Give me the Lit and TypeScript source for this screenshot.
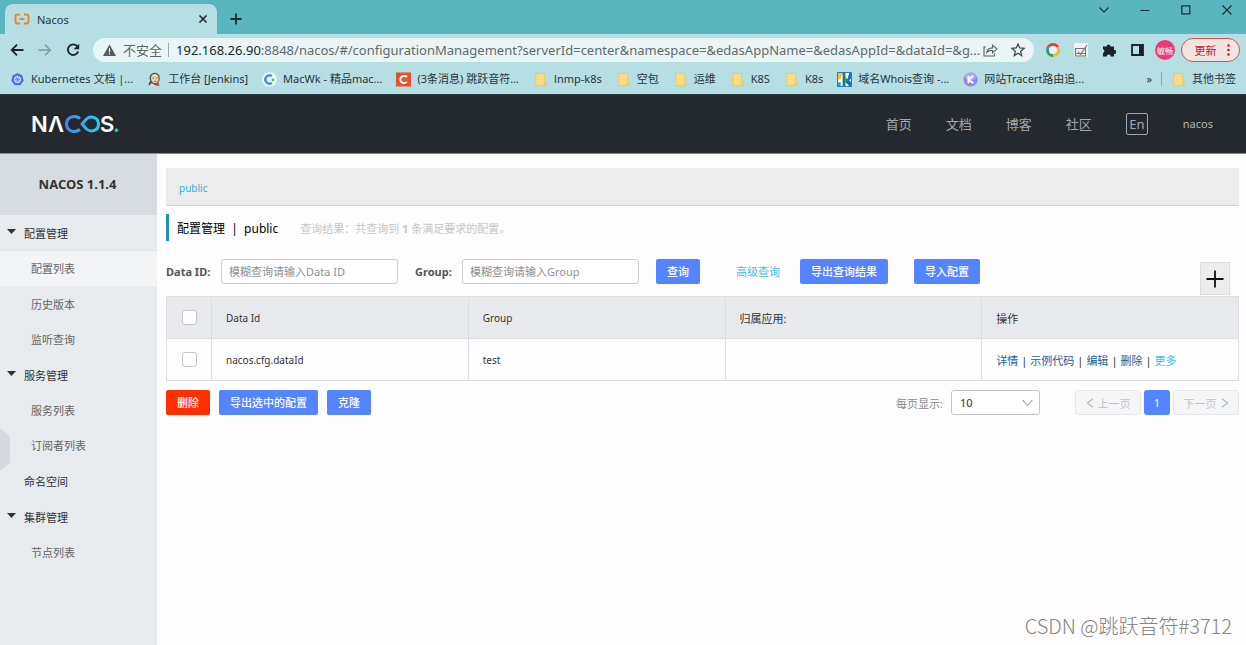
import { LitElement, html, css, svg, nothing } from "lit";
import { customElement, state } from "lit/decorators.js";
import { classMap } from "lit/directives/class-map.js";

const cjk = css`"Noto Sans", "Noto Sans CJK SC", sans-serif`;

const folder = svg`<svg class="ico" viewBox="0 0 16 16"><path d="M3 1.5h9.5v9l1.500.500v3.500H3z" fill="#f9dc84" stroke="#e8c45c" stroke-width=".8"/><path d="M11.500 11.500h2.500v3h-2.500z" fill="#f3ca5c"/></svg>`;

const icons: Record<string, unknown> = {
  folder,
  k8s: svg`<svg class="ico" viewBox="0 0 16 16"><path d="M8 .8l5.500 2.600 1.400 5.900-3.700 5H4.800l-3.700-5 1.400-5.900z" fill="#3b6fe0" stroke="#dfeaff" stroke-width=".6"/><circle cx="8" cy="8" r="3.200" fill="none" stroke="#fff" stroke-width=".9"/><path d="M8 3.500v9M3.800 6.700l8.400 2.600M4 9.800l8-3.600M5.400 11.600l5.200-7.200M5.400 4.400l5.200 7.200" stroke="#fff" stroke-width=".5"/><circle cx="8" cy="8" r="1" fill="#3b6fe0"/></svg>`,
  jenkins: svg`<svg class="ico" viewBox="0 0 16 16"><path d="M2 15c-.5-4 1-5 1.500-6C1.500 5 4 1 8 .8c4 0 6.300 3 5.500 7-.300 2-1.500 3.500-1.500 4l2 3.200z" fill="#5d5650"/><path d="M4.200 6C4.500 3.500 6 2 8.300 2c2.700 0 4.200 2 4 5-.200 3-1.300 5-3.600 5S4.500 9.500 4.200 6z" fill="#efd0b3"/><path d="M6 6.500h1.500M9.700 6.500h1.500M7.500 10h2.500" stroke="#5d4436" stroke-width=".8"/><path d="M2 15l3-3 3 1.500 3-1.500 3 3z" fill="#ddd"/><path d="M7 12.700l5-.7.500 2.800L9 14z" fill="#c33228"/></svg>`,
  macwk: svg`<svg class="ico" viewBox="0 0 16 16"><circle cx="8" cy="8" r="7.800" fill="#f3f9ff"/><path d="M10.500 4.400a4.400 4.400 0 1 0 0 7.200" fill="none" stroke="#3f8cf5" stroke-width="2.600"/><circle cx="11.700" cy="8.300" r="1.600" fill="#3ec95a"/></svg>`,
  csdn: svg`<svg class="ico" viewBox="0 0 16 16"><path d="M0 .5h16v15H0z" fill="#e8502f"/><path d="M11.800 5.200C9 3.200 4.600 4.400 4.600 8s4.400 4.800 7 2.800" fill="none" stroke="#fff" stroke-width="2"/></svg>`,
  whois: svg`<svg class="ico" viewBox="0 0 16 16"><path d="M.5.5h15v15H.500z" fill="#fff" stroke="#1d6fae"/><path d="M1 1h5L3.500 8H1z" fill="#f4c529"/><path d="M6 1h3v14H6z" fill="#227b5b"/><path d="M9 8V5l2 3 2-7h2v6l-2 2 2 2v4h-2L9 11z" fill="#1871b8"/><path d="M1 11h3v4H1z" fill="#27a0cf"/></svg>`,
  tracert: svg`<svg class="ico" viewBox="0 0 16 16"><circle cx="8" cy="8" r="7.500" fill="#8c88ee"/><ellipse cx="8" cy="5" rx="6" ry="4" fill="#aaa8f7"/><path d="M5.800 4v8M10.800 4L6 8.300l5 3.700" fill="none" stroke="#fff" stroke-width="1.900"/></svg>`,
};

const bookmarks: [string, string][] = [
  ["k8s", "Kubernetes 文档 |..."],
  ["jenkins", "工作台 [Jenkins]"],
  ["macwk", "MacWk - 精品mac..."],
  ["csdn", "(3条消息) 跳跃音符..."],
  ["folder", "lnmp-k8s"],
  ["folder", "空包"],
  ["folder", "运维"],
  ["folder", "K8S"],
  ["folder", "K8s"],
  ["whois", "域名Whois查询 -..."],
  ["tracert", "网站Tracert路由追..."],
];

@customElement("browser-chrome")
export class BrowserChrome extends LitElement {
  static styles = css`
    :host { display: block; font-family: ${cjk}; color: #26363a; background: #b5dfe2; border-bottom: 1px solid #2b3a40; }
    * { box-sizing: border-box; }
    button { font: inherit; color: inherit; border: 0; background: none; padding: 0; display: flex; align-items: center; justify-content: center; flex: none; }
    svg { display: block; flex: none; }
    .tabs { display: flex; height: 34px; background: #5ab5be; padding-left: 5px; }
    .tab { display: flex; align-items: center; width: 212px; height: 30px; margin-top: 4px; padding: 0 8px 0 9px; background: #b5dfe2; border-radius: 8px 8px 0 0; font-size: 11px; gap: 7px; }
    .tab-name { flex: 1; }
    .plus { width: 38px; height: 30px; margin-top: 4px; }
    .window { margin-left: auto; display: flex; height: 20px; gap: 3px; }
    .window button { width: 38px; }
    .toolbar { display: flex; align-items: center; height: 32px; padding: 0 6px 0 3px; }
    .nav { width: 28px; height: 24px; }
    .address { flex: 1; min-width: 0; height: 24px; margin: 0 5px 0 6px; border-radius: 12px; background: #eaf6f6; display: flex; align-items: center; padding: 0 2px 0 10px; }
    .unsafe { font-size: 13px; line-height: 20px; color: #5f6668; margin: 0 6px 0 7px; white-space: nowrap; }
    .rule { width: 1px; height: 14px; background: #9aa8aa; flex: none; }
    .host { font-size: 13px; color: #20282a; margin-left: 7px; }
    .url { flex: 1; min-width: 0; border: 0; padding: 0; background: none; outline: 0; color: #62696b; font: 13px ${cjk}; text-overflow: ellipsis; }
    .tool { width: 28px; height: 24px; }
    .share { width: 15px; margin-right: 6px; }
    .avatar { width: 20px; height: 20px; border-radius: 50%; background: #ec3a78; color: #fff; font-size: 8px; margin: 0 6px 0 4px; }
    .update { width: 59px; height: 24px; border: 1px solid #d4574f; border-radius: 12px; background: #f2e4e3; color: #c5221f; font-size: 11px; gap: 10px; padding-left: 3px; }
    .marks { display: flex; align-items: center; height: 28px; padding: 0 10px 2px 10px; gap: 14px; font-size: 11px; line-height: 16px; white-space: nowrap; overflow: hidden; }
    .mark { display: flex; align-items: center; gap: 6px; color: inherit; text-decoration: none; }
    .ico { width: 15px; height: 15px; }
    .more { margin-left: auto; display: flex; align-items: center; gap: 9px; }
  `;

  render() {
    return html`
      <div class="tabs">
        <div class="tab">
          <svg width="16" height="12" viewBox="0 0 16 12"><path d="M6 1.500H3.500Q1.500 1.500 1.500 3.500v5q0 2 2 2H6M10 1.500h2.500q2 0 2 2v5q0 2-2 2H10M5.500 6h5" fill="none" stroke="#e8803a" stroke-width="1.900"/></svg>
          <span class="tab-name">Nacos</span>
          <button aria-label="关闭标签页"><svg width="12" height="12" viewBox="0 0 12 12"><path d="M2.500 2.500l7 7M9.500 2.500l-7 7" stroke="#20282a" stroke-width="1.600"/></svg></button>
        </div>
        <button class="plus" aria-label="新标签页"><svg width="12" height="12" viewBox="0 0 12 12"><path d="M6 .5v11M.5 6h11" stroke="#1c2c30" stroke-width="1.800"/></svg></button>
        <div class="window">
          <button aria-label="搜索标签页"><svg width="12" height="10" viewBox="0 0 12 10"><path d="M1.500 2.500L6 7l4.500-4.500" fill="none" stroke="#1c2c30" stroke-width="1.100"/></svg></button>
          <button aria-label="最小化"><svg width="10" height="10" viewBox="0 0 10 10"><path d="M.5 5.500h9" stroke="#1c2c30"/></svg></button>
          <button aria-label="最大化"><svg width="10" height="10" viewBox="0 0 10 10"><path d="M.8.8h8v8h-8z" fill="none" stroke="#1c2c30" stroke-width="1.200"/></svg></button>
          <button aria-label="关闭"><svg width="10" height="10" viewBox="0 0 10 10"><path d="M.5.500l9 9M9.500.500l-9 9" stroke="#1c2c30" stroke-width="1.100"/></svg></button>
        </div>
      </div>
      <div class="toolbar">
        <button class="nav" aria-label="后退"><svg width="14" height="14" viewBox="0 0 14 14"><path d="M13.500 7H2M7 1.700L1.700 7 7 12.300" fill="none" stroke="#1d2629" stroke-width="1.800"/></svg></button>
        <button class="nav" aria-label="前进"><svg width="14" height="14" viewBox="0 0 14 14"><path d="M.5 7H12M7 1.700L12.300 7 7 12.300" fill="none" stroke="#7b999d" stroke-width="1.500"/></svg></button>
        <button class="nav" aria-label="重新加载"><svg width="14" height="14" viewBox="0 0 14 14"><path d="M11.300 3.300A5.300 5.300 0 1 0 12.200 8.500" fill="none" stroke="#1d2629" stroke-width="1.900"/><path d="M13.200.700v5.500H7.700z" fill="#1d2629"/></svg></button>
        <div class="address">
          <svg width="13" height="12" viewBox="0 0 13 12"><path d="M6.500.500L13 12H0z" fill="#54595b"/><path d="M6.500 4.200v4M6.500 9.200v1.300" stroke="#fff" stroke-width="1.300"/></svg>
          <span class="unsafe">不安全</span><span class="rule"></span><span class="host">192.168.26.90</span>
          <input class="url" aria-label="地址" .value=${":8848/nacos/#/configurationManagement?serverId=center&namespace=&edasAppName=&edasAppId=&dataId=&g..."} />
          <button class="tool share" aria-label="分享"><svg width="15" height="14" viewBox="0 0 15 14"><path d="M2.700 4H1v9h10.500V10.500M3.700 9.500c.5-3 2.500-4.500 5.800-4.600V2.200L14 6 9.500 9.800V7.200c-2.500 0-4.300.6-5.800 2.300z" fill="none" stroke="#555e60" stroke-width="1.100"/></svg></button>
          <button class="tool" aria-label="收藏"><svg width="14" height="14" viewBox="0 0 14 14"><path d="M7 1l1.700 4 4.300.4-3.300 2.900 1 4.200L7 10.200l-3.700 2.300 1-4.200L1 5.400 5.300 5z" fill="none" stroke="#444c4e" stroke-width="1.300"/></svg></button>
        </div>
        <button class="tool" aria-label="扩展一"><svg width="16" height="16" viewBox="0 0 16 16"><g fill="none" stroke-width="3"><path d="M3.200 5.200A5.500 5.500 0 0 1 12.800 5.200" stroke="#dc4437"/><path d="M12.800 5.200A5.500 5.500 0 0 1 8 13.500" stroke="#f4bc2a"/><path d="M8 13.500A5.500 5.500 0 0 1 2.500 8" stroke="#35a257"/><path d="M2.500 8a5.500 5.500 0 0 1 .7-2.800" stroke="#4a8bf0"/></g><circle cx="8" cy="8" r="4" fill="#e9f3fb"/></svg></button>
        <button class="tool" aria-label="扩展二"><svg width="14" height="14" viewBox="0 0 14 14"><path d="M0 0h14v14H0z" fill="#f3f3f3"/><path d="M1 5.500h11M1.500 5.500v7.500h10V5.500M4 8.500l2.500 3L13 2M1.500 10.500h10" fill="none" stroke="#777" stroke-width="1.100"/></svg></button>
        <button class="tool" aria-label="扩展程序"><svg width="14" height="14" viewBox="0 0 14 14"><path d="M1 3.500h3.500a2 2 0 1 1 4 0H12V7a2 2 0 1 1 0 3.800V13.500H8.700a2 2 0 0 0-4 0H1V10a2 2 0 0 0 0-3.800z" fill="#1b2326"/></svg></button>
        <button class="tool" aria-label="侧边栏"><svg width="13" height="12" viewBox="0 0 13 12"><path d="M1 1h11v10H1z" fill="none" stroke="#1b2326" stroke-width="1.800"/><path d="M8 1h4v10H8z" fill="#1b2326"/></svg></button>
        <button class="avatar" aria-label="用户">敏畅</button>
        <button class="update">更新<svg width="3" height="12" viewBox="0 0 3 12"><g fill="#c5221f"><circle cx="1.500" cy="1.500" r="1.300"/><circle cx="1.500" cy="6" r="1.300"/><circle cx="1.500" cy="10.500" r="1.300"/></g></svg></button>
      </div>
      <nav class="marks">
        ${bookmarks.map(([icon, name]) => html`<a class="mark" href="#">${icons[icon]}<span>${name}</span></a>`)}
        <div class="more"><span>»</span><span class="rule"></span><a class="mark" href="#">${folder}<span>其他书签</span></a></div>
      </nav>`;
  }
}

@customElement("nacos-header")
export class NacosHeader extends LitElement {
  static styles = css`
    :host { display: flex; align-items: center; height: 59px; box-sizing: border-box; padding: 0 33px 0 30px; background: #24292f; border-bottom: 1px solid #85888c; font-family: ${cjk}; }
    .logo { display: block; width: 96px; height: 40px; }
    .menu { margin-left: auto; display: flex; align-items: center; gap: 34px; }
    .link { color: #a3a7ab; font-size: 13px; line-height: 20px; text-decoration: none; }
    .lang { box-sizing: border-box; width: 22px; height: 22px; padding: 0; border: 1px solid #a3a7ab; border-radius: 2px; background: none; color: #a3a7ab; font: 13px/18px ${cjk}; margin-right: 1px; }
    .user { font-size: 11px; color: #b0b3b6; }
  `;

  render() {
    return html`
      <svg class="logo" viewBox="0 0 96 40" role="img" aria-label="NACOS.">
        <defs><linearGradient id="g" gradientUnits="userSpaceOnUse" x1="35" y1="0" x2="70" y2="0"><stop offset="0" stop-color="#4a7ff2"/><stop offset="1" stop-color="#22d5e6"/></linearGradient></defs>
        <g font-family="Inter, sans-serif" font-weight="600" font-size="22" fill="#fff"><text x="1" y="28">N</text><text x="18" y="28">Λ</text><text x="70" y="28">S</text><text x="83" y="28" fill="#22c8dc">.</text></g>
        <path d="M50 14.500C44 10 36.500 13.500 36.500 20s7.500 10 13.500 5.500M52 20l4.500-5C61 11 68.500 13.500 68.500 20s-7.500 9-12 5z" fill="none" stroke="url(#g)" stroke-width="3" stroke-linejoin="round"/>
      </svg>
      <nav class="menu">
        ${["首页", "文档", "博客", "社区"].map((t) => html`<a class="link" href="#">${t}</a>`)}
        <button class="lang">En</button>
        <a class="link user" href="#">nacos</a>
      </nav>`;
  }
}

const menu: { name: string; items: string[] }[] = [
  { name: "配置管理", items: ["配置列表", "历史版本", "监听查询"] },
  { name: "服务管理", items: ["服务列表", "订阅者列表"] },
  { name: "命名空间", items: [] },
  { name: "集群管理", items: ["节点列表"] },
];

@customElement("nacos-sidebar")
export class NacosSidebar extends LitElement {
  @state() active = "配置列表";

  static styles = css`
    :host { display: block; position: relative; width: 157px; flex: none; background: #e7ebee; font-family: ${cjk}; font-size: 11px; color: #333; }
    .title { height: 61px; line-height: 61px; margin: 0; background: #d7dce3; text-align: center; font-size: 13px; font-weight: 700; padding-right: 2px; }
    .list { list-style: none; margin: 0; padding: 0; }
    .group { margin-bottom: 1px; }
    .head { display: flex; align-items: center; height: 35px; padding-left: 7px; gap: 8px; }
    .arrow { width: 9px; height: 5px; margin-bottom: 3px; }
    .item { display: block; height: 35px; line-height: 37px; padding-left: 31px; color: #666; text-decoration: none; }
    .active { background: #f2f4f6; border-top: 1px solid #e2e4e9; line-height: 35px; }
    .handle { position: absolute; left: 0; top: 274px; width: 10px; height: 43px; padding: 0; border: 0; background: #d5dae1; clip-path: polygon(0 0, 100% 20%, 100% 80%, 0 100%); }
  `;

  render() {
    return html`
      <h2 class="title">NACOS 1.1.4</h2>
      <ul class="list">
        ${menu.map((g) => html`<li class="group">
          <div class="head"><svg class="arrow" viewBox="0 0 9 5">${g.items.length ? svg`<path d="M0 0h9L4.500 5z" fill="#333"/>` : nothing}</svg>${g.name}</div>
          ${g.items.map((t) => html`<a href="#" class=${classMap({ item: true, active: t === this.active })}>${t}</a>`)}
        </li>`)}
      </ul>
      <button class="handle" aria-label="收起菜单"></button>`;
  }
}

@customElement("config-page")
export class ConfigPage extends LitElement {
  static styles = css`
    :host { display: block; flex: 1; min-width: 0; padding: 14px 7px 0 9px; background: #fdfdfd; font-family: ${cjk}; font-size: 11px; color: #333; }
    * { box-sizing: border-box; }
    .namespace { height: 38px; display: flex; align-items: center; padding: 2px 13px 0; background: #ececec; border-bottom: 1px solid #d3d3d3; }
    .namespace a { color: #35b4d2; font-size: 10px; text-decoration: none; }
    .heading { display: flex; align-items: center; height: 27px; margin: 8px 0 18px; border-left: 3px solid #1f8fb3; padding-left: 8px; }
    .heading h1 { margin: 0 22px 0 0; font-size: 12px; font-weight: 400; color: #000; white-space: pre; }
    .result { color: #c6c6c6; }
    .search { display: flex; height: 37px; }
    .field { display: flex; align-items: center; height: 25px; }
    .field label { font-weight: 700; color: #555; font-size: 11px; }
    .id-label { width: 55px; }
    .group-label { width: 47px; }
    .text { width: 177px; height: 25px; border: 1px solid #ccc; border-radius: 3px; padding: 0 7px; font: 11px ${cjk}; color: #333; background: #fff; }
    .field { margin-right: 17px; }
    .text::placeholder { color: #909090; opacity: 1; }
    .btn { height: 25px; padding: 0 11px; border: 0; border-radius: 2px; background: #5584ff; color: #fff; font: 500 11px/22px ${cjk}; white-space: nowrap; }
    .danger { background: #ff3000; }
    .advanced { line-height: 25px; margin: 0 20px 0 36px; color: #4cc0d2; text-decoration: none; }
    .import { margin-left: 26px; }
    .add { align-self: flex-end; width: 30px; height: 33px; margin: 0 9px 1px auto; padding: 0; border: 1px solid #ddd; background: #ececec; display: grid; place-items: center; }
    .table { width: 100%; border-collapse: collapse; table-layout: fixed; border: 1px solid #dcdee3; }
    .table th, .table td { height: 42px; padding: 0 14px; text-align: left; font-weight: 400; border: 1px solid #dcdee3; }
    .table th { background: #e8e9ed; }
    .table .check { width: 45px; padding: 0 0 2px; text-align: center; }
    .table .latin { font-size: 10px; }
    .box { appearance: none; width: 15px; height: 15px; margin: 0; border: 1px solid #c4c6cf; border-radius: 3px; background: #fff; vertical-align: middle; }
    .ops { white-space: nowrap; }
    .ops a { color: #1a5fa0; text-decoration: none; }
    .ops .open { color: #4cc0d2; }
    .sep { margin: 0 3px; }
    .foot { display: flex; align-items: center; margin-top: 9px; gap: 9px; }
    .size { margin-left: auto; display: flex; align-items: center; gap: 8px; color: #888; }
    .select { display: grid; align-items: center; width: 89px; }
    .select select { grid-area: 1 / 1; appearance: none; width: 100%; height: 25px; border: 1px solid #c4c6cf; border-radius: 3px; background: #fff; padding: 0 8px; font: 11px ${cjk}; color: #333; }
    .select svg { grid-area: 1 / 1; justify-self: end; margin-right: 7px; pointer-events: none; }
    .pages { display: flex; gap: 3px; margin-left: 26px; }
    .page { display: flex; align-items: center; justify-content: center; gap: 4px; width: 66px; height: 25px; border: 1px solid #e6e7eb; border-radius: 3px; background: #f5f6f8; color: #c4c4c4; font: 11px ${cjk}; padding: 0; }
    .current { width: 26px; border: 0; background: #5584ff; color: #fff; }
  `;

  render() {
    return html`
      <div class="namespace"><a href="#">public</a></div>
      <div class="heading"><h1>配置管理  |  public</h1><span class="result">查询结果：共查询到 <b>1</b> 条满足要求的配置。</span></div>
      <div class="search">
        <div class="field"><label class="id-label" for="did">Data ID:</label><input class="text" id="did" placeholder="模糊查询请输入Data ID" /></div>
        <div class="field"><label class="group-label" for="grp">Group:</label><input class="text" id="grp" placeholder="模糊查询请输入Group" /></div>
        <button class="btn">查询</button>
        <a class="advanced" href="#">高级查询</a>
        <button class="btn">导出查询结果</button>
        <button class="btn import">导入配置</button>
        <button class="add" aria-label="新建配置"><svg width="18" height="18" viewBox="0 0 18 18"><path d="M9 .5v17M.5 9h17" stroke="#111" stroke-width="1.800"/></svg></button>
      </div>
      <table class="table">
        <thead><tr><th class="check"><input class="box" type="checkbox" aria-label="全选" /></th><th class="latin">Data Id</th><th class="latin">Group</th><th>归属应用:</th><th>操作</th></tr></thead>
        <tbody><tr>
          <td class="check"><input class="box" type="checkbox" aria-label="选择 nacos.cfg.dataId" /></td><td class="latin">nacos.cfg.dataId</td><td class="latin">test</td><td></td>
          <td class="ops">${["详情", "示例代码", "编辑", "删除"].map((t) => html`<a href="#">${t}</a><span class="sep">|</span>`)}<a class="open" href="#">更多</a></td>
        </tr></tbody>
      </table>
      <div class="foot">
        <button class="btn danger">删除</button><button class="btn">导出选中的配置</button><button class="btn">克隆</button>
        <div class="size"><label for="size">每页显示:</label>
          <div class="select"><select id="size"><option>10</option><option>20</option><option>30</option></select>
          <svg width="11" height="8" viewBox="0 0 11 8"><path d="M.7 1l4.800 5.500L10.300 1" fill="none" stroke="#999" stroke-width="1.100"/></svg></div>
        </div>
        <div class="pages">
          <button class="page" disabled><svg width="8" height="10" viewBox="0 0 8 10"><path d="M7 .7L1.500 5 7 9.300" fill="none" stroke="#bbb" stroke-width="1.300"/></svg>上一页</button>
          <button class="page current">1</button>
          <button class="page" disabled>下一页<svg width="8" height="10" viewBox="0 0 8 10"><path d="M1 .7L6.500 5 1 9.300" fill="none" stroke="#bbb" stroke-width="1.300"/></svg></button>
        </div>
      </div>`;
  }
}

@customElement("app-root")
export class AppRoot extends LitElement {
  static styles = css`
    :host { display: flex; flex-direction: column; min-height: 100vh; position: relative; background: #fdfdfd; }
    .body { display: flex; flex: 1; }
    .credit { position: absolute; right: 14px; bottom: 4px; font: 300 20px/30px "Noto Sans CJK SC", sans-serif; color: #858585; }
  `;

  render() {
    return html`
      <browser-chrome></browser-chrome>
      <nacos-header></nacos-header>
      <div class="body"><nacos-sidebar></nacos-sidebar><config-page></config-page></div>
      <span class="credit">CSDN @跳跃音符#3712</span>`;
  }
}
